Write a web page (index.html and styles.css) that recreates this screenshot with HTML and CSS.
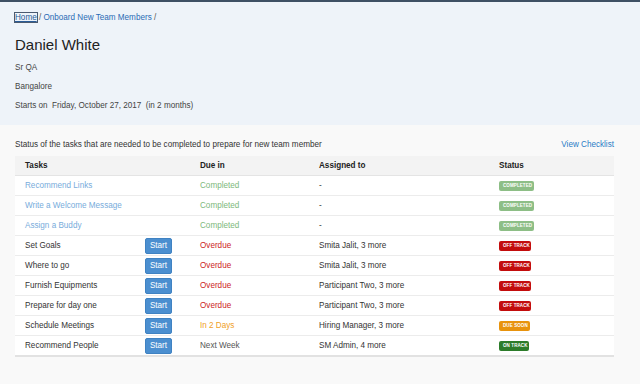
FILE: index.html
```html
<!DOCTYPE html>
<html>
<head>
<meta charset="utf-8">
<link rel="stylesheet" href="styles.css">
</head>
<body>
<header class="hero">
  <nav class="crumbs"><a class="home" href="#">Home</a> / <a href="#">Onboard New Team Members</a> /</nav>
  <h1 class="name">Daniel White</h1>
  <p class="meta">Sr QA</p>
  <p class="meta">Bangalore</p>
  <p class="meta">Starts on&nbsp; Friday, October 27, 2017&nbsp; (in 2 months)</p>
</header>
<main class="content">
  <div class="intro">
    <span>Status of the tasks that are needed to be completed to prepare for new team member</span>
    <a href="#" class="checklist">View Checklist</a>
  </div>
  <div class="table">
    <div class="row head">
      <div class="c1">Tasks</div><div class="c2"></div><div class="c3">Due in</div><div class="c4">Assigned to</div><div class="c5">Status</div>
    </div>
    <div class="row">
      <div class="c1 done">Recommend Links</div><div class="c2"></div><div class="c3 green">Completed</div><div class="c4">-</div><div class="c5"><span class="badge b-done">COMPLETED</span></div>
    </div>
    <div class="row">
      <div class="c1 done">Write a Welcome Message</div><div class="c2"></div><div class="c3 green">Completed</div><div class="c4">-</div><div class="c5"><span class="badge b-done">COMPLETED</span></div>
    </div>
    <div class="row">
      <div class="c1 done">Assign a Buddy</div><div class="c2"></div><div class="c3 green">Completed</div><div class="c4">-</div><div class="c5"><span class="badge b-done">COMPLETED</span></div>
    </div>
    <div class="row">
      <div class="c1">Set Goals</div><div class="c2"><button class="start">Start</button></div><div class="c3 red">Overdue</div><div class="c4">Smita Jalit, 3 more</div><div class="c5"><span class="badge b-off">OFF TRACK</span></div>
    </div>
    <div class="row">
      <div class="c1">Where to go</div><div class="c2"><button class="start">Start</button></div><div class="c3 red">Overdue</div><div class="c4">Smita Jalit, 3 more</div><div class="c5"><span class="badge b-off">OFF TRACK</span></div>
    </div>
    <div class="row">
      <div class="c1">Furnish Equipments</div><div class="c2"><button class="start">Start</button></div><div class="c3 red">Overdue</div><div class="c4">Participant Two, 3 more</div><div class="c5"><span class="badge b-off">OFF TRACK</span></div>
    </div>
    <div class="row">
      <div class="c1">Prepare for day one</div><div class="c2"><button class="start">Start</button></div><div class="c3 red">Overdue</div><div class="c4">Participant Two, 3 more</div><div class="c5"><span class="badge b-off">OFF TRACK</span></div>
    </div>
    <div class="row">
      <div class="c1">Schedule Meetings</div><div class="c2"><button class="start">Start</button></div><div class="c3 orange">In 2 Days</div><div class="c4">Hiring Manager, 3 more</div><div class="c5"><span class="badge b-soon">DUE SOON</span></div>
    </div>
    <div class="row last">
      <div class="c1">Recommend People</div><div class="c2"><button class="start">Start</button></div><div class="c3 grey">Next Week</div><div class="c4">SM Admin, 4 more</div><div class="c5"><span class="badge b-on">ON TRACK</span></div>
    </div>
  </div>
</main>
</body>
</html>
```
FILE: styles.css
```css
* { box-sizing: border-box; }
html, body { margin: 0; padding: 0; }
body {
  font-family: "Liberation Sans", Arial, sans-serif;
  font-size: 8.15px;
  color: #333;
  background: #f9f9f9;
  width: 640px;
  height: 384px;
  overflow: hidden;
}
a { text-decoration: none; }
.hero {
  background: #eef3f9;
  border-top: 2px solid #3e5064;
  height: 125px;
  padding: 11px 15px 0;
}
.crumbs { color: #555; line-height: 10px; height: 10px; }
.crumbs a { color: #2a6bb5; }
.crumbs .home {
  color: #2a5c98;
  text-decoration: underline;
  outline: 1px solid #4a5a70;
  outline-offset: 0;
}
.name {
  margin: 13px 0 0;
  font-size: 15px;
  font-weight: normal;
  line-height: 17px;
  color: #222;
}
.meta {
  margin: 0;
  color: #444;
  line-height: 10px;
}
.name + .meta { margin-top: 10px; }
.meta + .meta { margin-top: 9px; }
.content { padding: 15px 26px 0 15px; }
.intro {
  display: flex;
  justify-content: space-between;
  align-items: center;
  height: 10px;
  line-height: 10px;
  color: #333;
}
.checklist { color: #2a7cc6; }
.table {
  margin-top: 6px;
  background: #fff;
  border-bottom: 2px solid #e2e2e2;
}
.row {
  display: grid;
  grid-template-columns: 130px 45px 119px 180px 1fr;
  align-items: center;
  height: 20px;
  border-bottom: 1px solid #ececec;
}
.row.last { border-bottom: none; height: 19px; }
.row.head {
  background: #f3f3f3;
  font-weight: bold;
  color: #222;
  border-bottom: 1px solid #e4e4e4;
}
.c1, .c3, .c4, .c5 { padding-left: 10px; white-space: nowrap; }
.c2 { display: flex; align-items: center; }
.done { color: #78acdb; }
.green { color: #7db87b; }
.red { color: #cc1c1c; }
.orange { color: #f0a01e; }
.grey { color: #555; }
.start {
  font-family: "Liberation Sans", Arial, sans-serif;
  font-size: 8.15px;
  color: #fff;
  background: #4b8fd0;
  border: 1px solid #3f82c2;
  border-radius: 2px;
  width: 27px;
  height: 16px;
  padding: 0;
  line-height: 14px;
}
.badge {
  display: inline-block;
  font-size: 4.5px;
  font-weight: bold;
  color: #fff;
  height: 10px;
  line-height: 10px;
  padding: 0 4px;
  border-radius: 2px;
  letter-spacing: 0.1px;
  vertical-align: middle;
}
.b-done { background: #8dbe86; width: 35px; }
.b-off { background: #c30d0d; width: 32px; }
.b-soon { background: #e8930d; width: 31px; }
.b-on { background: #2c7c2a; width: 30px; }
```
